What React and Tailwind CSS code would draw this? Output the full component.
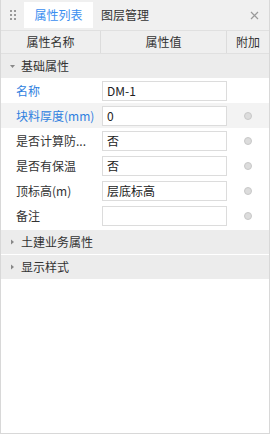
import React from "react";

const F = { fontFamily: '"Noto Sans CJK SC", "Microsoft YaHei", sans-serif' };

function Radio() {
  return <span className="block w-[8px] h-[8px] rounded-full bg-[#dcdcdc] border border-[#c8c8c8]" />;
}

function Row({ label, value, blue, radio, hl }) {
  return (
    <div className={`flex h-[25px] items-center ${hl ? "bg-[#f3f3f3]" : "bg-white"}`}>
      <div className={`w-[101px] pl-[15px] text-[12px] truncate ${blue ? "text-[#2f7fe0]" : "text-[#333]"}`}>{label}</div>
      <div className="w-[125px] h-[20px] border border-[#dcdcdc] bg-white flex items-center pl-[4px] text-[12px] text-[#222]">
        {value}
      </div>
      <div className="flex-1 flex items-center justify-center">{radio && <Radio />}</div>
    </div>
  );
}

function Group({ title, open, className = "" }) {
  return (
    <div className={`flex h-[24px] items-center bg-[#ececec] ${className}`}>
      <svg width="20" height="24" viewBox="0 0 20 24" className="shrink-0">
        {open ? (
          <path d="M9 11 L14 11 L11.5 14 Z" fill="#888" />
        ) : (
          <path d="M10 9.5 L13 12 L10 14.5 Z" fill="#888" />
        )}
      </svg>
      <span className="text-[12px] text-[#333]">{title}</span>
    </div>
  );
}

export default function App() {
  return (
    <div style={F} className="w-[270px] h-[434px] bg-white border-l border-r border-b border-[#d8d8d8] flex flex-col overflow-hidden">
      <div className="h-[31px] bg-[#f0f0f0] border-b border-[#e0e0e0] flex items-start relative">
        <div className="w-[23px] h-[30px] flex items-center justify-center">
          <div className="grid grid-cols-2 gap-x-[2px] gap-y-[2px]">
            {[0, 1, 2, 3, 4, 5].map((i) => (
              <span key={i} className="block w-[2px] h-[2px] bg-[#9a9a9a]" />
            ))}
          </div>
        </div>
        <div className="mt-[2px] h-[26px] w-[69px] bg-white flex items-center justify-center text-[12px] text-[#3a8ef0]">
          属性列表
        </div>
        <div className="h-[30px] ml-[8px] flex items-center text-[12px] text-[#333]">图层管理</div>
        <svg className="absolute right-[10px] top-[11px]" width="9" height="9" viewBox="0 0 9 9">
          <path d="M1 1 L8 8 M8 1 L1 8" stroke="#9a9a9a" strokeWidth="1.2" />
        </svg>
      </div>
      <div className="h-[23px] bg-[#efefef] border-b border-[#e0e0e0] flex text-[12px] text-[#333]">
        <div className="w-[100px] border-r border-[#dcdcdc] flex items-center justify-center">属性名称</div>
        <div className="w-[126px] border-r border-[#dcdcdc] flex items-center justify-center">属性值</div>
        <div className="flex-1 flex items-center justify-center">附加</div>
      </div>
      <Group title="基础属性" open />
      <Row label="名称" value="DM-1" blue />
      <Row label="块料厚度(mm)" value="0" blue radio hl />
      <Row label="是否计算防..." value="否" radio />
      <Row label="是否有保温" value="否" radio />
      <Row label="顶标高(m)" value="层底标高" radio />
      <Row label="备注" value="" radio />
      <Group title="土建业务属性" className="mt-[2px]" />
      <Group title="显示样式" className="mt-[1px]" />
    </div>
  );
}
